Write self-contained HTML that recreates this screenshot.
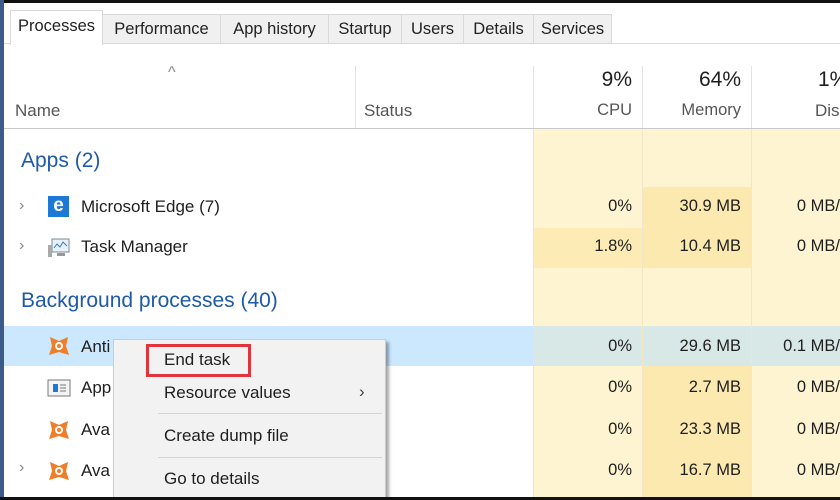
<!DOCTYPE html>
<html><head><style>
*{margin:0;padding:0;box-sizing:border-box}
body{width:840px;height:500px;overflow:hidden;background:#fff;font-family:"Liberation Sans",sans-serif;color:#1e1e1e;position:relative}
.a{position:absolute;white-space:nowrap}
.t{font-size:17px}
.tab{position:absolute;top:14px;height:30px;background:#f0f0f0;border:1px solid #d9d9d9;border-left:none;font-size:16.5px;padding-top:5px;text-align:center;color:#222}
.r{text-align:right;font-size:16.5px}
.vl{position:absolute;width:1px;background:#e3e3e3}
</style></head><body>
<div class="a" style="left:4px;top:43px;width:836px;height:1px;background:#d9d9d9"></div>
<div class="tab" style="left:103px;width:118px">Performance</div>
<div class="tab" style="left:221px;width:108px">App history</div>
<div class="tab" style="left:329px;width:73px">Startup</div>
<div class="tab" style="left:402px;width:62px">Users</div>
<div class="tab" style="left:464px;width:70px">Details</div>
<div class="tab" style="left:534px;width:78px">Services</div>
<div class="tab" style="left:10px;top:10px;width:93px;height:35px;background:#fff;border-left:1px solid #d9d9d9;border-bottom:none;padding-top:6px">Processes</div>
<!-- column backgrounds -->
<div class="a" style="left:533px;top:129px;width:307px;height:371px;background:#fff4d2"></div>
<div class="a" style="left:642px;top:187px;width:109px;height:41px;background:#fbe9b0"></div>
<div class="a" style="left:533px;top:228px;width:109px;height:40px;background:#fcebb4"></div>
<div class="a" style="left:642px;top:228px;width:109px;height:40px;background:#fbe9b0"></div>
<div class="a" style="left:642px;top:366px;width:109px;height:134px;background:#fbe9b0"></div>
<div class="a" style="left:4px;top:326px;width:529px;height:40px;background:#cce8ff"></div>
<div class="a" style="left:533px;top:326px;width:307px;height:40px;background:#d8e8e6"></div>
<div class="vl" style="left:355px;top:66px;height:62px"></div>
<div class="vl" style="left:533px;top:66px;height:434px"></div>
<div class="vl" style="left:642px;top:66px;height:434px;background:#f2e6c6"></div>
<div class="vl" style="left:751px;top:66px;height:434px;background:#f2e6c6"></div>
<div class="vl" style="left:642px;top:66px;height:62px"></div>
<div class="vl" style="left:751px;top:66px;height:62px"></div>
<div class="a" style="left:4px;top:128px;width:836px;height:1px;background:#c9c9c9"></div>
<!-- header -->
<div class="a" style="left:168px;top:64px;color:#888;font-size:16px">&#94;</div>
<div class="a t" style="left:15px;top:101px;color:#555">Name</div>
<div class="a t" style="left:364px;top:101px;color:#555">Status</div>
<div class="a r" style="left:533px;width:99px;top:68px;font-size:21px">9%</div>
<div class="a r" style="left:642px;width:99px;top:68px;font-size:21px">64%</div>
<div class="a" style="left:818px;top:68px;font-size:21px">1%</div>
<div class="a r" style="left:533px;width:99px;top:101px;color:#555">CPU</div>
<div class="a r" style="left:642px;width:99px;top:101px;color:#555">Memory</div>
<div class="a t" style="left:815px;top:101px;color:#555">Disk</div>
<!-- groups -->
<div class="a" style="left:21px;top:149px;font-size:21px;color:#1e5aa8">Apps (2)</div>
<div class="a" style="left:21px;top:289px;font-size:21px;color:#1e5aa8">Background processes (40)</div>
<!-- rows -->
<div class="a" style="left:19px;top:197px;color:#888">&#8250;</div>
<div class="a" style="left:19px;top:237px;color:#888">&#8250;</div>
<div class="a" style="left:19px;top:459px;color:#888">&#8250;</div>
<div class="a" style="left:48px;top:196px;width:21px;height:21px;background:#1e78d6;color:#fff;font-weight:bold;font-size:19px;text-align:center;line-height:19px">e</div>
<svg class="a" style="left:47px;top:237px" width="24" height="22"><rect x="5" y="2" width="17" height="13" fill="#e8f0f8" stroke="#7a8a9a"/><path d="M7 11 L10 7 L13 10 L16 5 L20 9" stroke="#3a7ac0" fill="none"/><rect x="1" y="8" width="4" height="12" fill="#aaa"/><rect x="10" y="16" width="8" height="3" fill="#999"/></svg>
<div class="a t" style="left:81px;top:197px">Microsoft Edge (7)</div>
<div class="a t" style="left:81px;top:237px">Task Manager</div>
<svg class="a" style="left:47px;top:334px" width="24" height="24"><path d="M3 3 L12 7 L21 3 L19 12 L22 21 L12 18 L2 21 L5 12 Z" fill="#f07d28"/><circle cx="12" cy="12" r="4" fill="#fff"/><circle cx="12" cy="12" r="2" fill="#f07d28"/></svg>
<svg class="a" style="left:47px;top:418px" width="24" height="24"><path d="M3 3 L12 7 L21 3 L19 12 L22 21 L12 18 L2 21 L5 12 Z" fill="#f07d28"/><circle cx="12" cy="12" r="4" fill="#fff"/><circle cx="12" cy="12" r="2" fill="#f07d28"/></svg>
<svg class="a" style="left:47px;top:459px" width="24" height="24"><path d="M3 3 L12 7 L21 3 L19 12 L22 21 L12 18 L2 21 L5 12 Z" fill="#f07d28"/><circle cx="12" cy="12" r="4" fill="#fff"/><circle cx="12" cy="12" r="2" fill="#f07d28"/></svg>
<svg class="a" style="left:47px;top:378px" width="24" height="20"><rect x="1" y="2" width="22" height="16" fill="#f4f4f4" stroke="#777"/><rect x="6" y="6" width="5" height="8" fill="#1e78d6"/><path d="M13 7h6M13 10h6M13 13h6" stroke="#777"/></svg>
<div class="a t" style="left:81px;top:337px">Anti</div>
<div class="a t" style="left:81px;top:378px">App</div>
<div class="a t" style="left:81px;top:420px">Ava</div>
<div class="a t" style="left:81px;top:461px">Ava</div>
<div class="a r" style="left:533px;width:99px;top:197px">0%</div>
<div class="a r" style="left:642px;width:99px;top:197px">30.9 MB</div>
<div class="a r" style="left:751px;width:89px;top:197px">0 MB/</div>
<div class="a r" style="left:533px;width:99px;top:237px">1.8%</div>
<div class="a r" style="left:642px;width:99px;top:237px">10.4 MB</div>
<div class="a r" style="left:751px;width:89px;top:237px">0 MB/</div>
<div class="a r" style="left:533px;width:99px;top:337px">0%</div>
<div class="a r" style="left:642px;width:99px;top:337px">29.6 MB</div>
<div class="a r" style="left:751px;width:89px;top:337px">0.1 MB/</div>
<div class="a r" style="left:533px;width:99px;top:378px">0%</div>
<div class="a r" style="left:642px;width:99px;top:378px">2.7 MB</div>
<div class="a r" style="left:751px;width:89px;top:378px">0 MB/</div>
<div class="a r" style="left:533px;width:99px;top:420px">0%</div>
<div class="a r" style="left:642px;width:99px;top:420px">23.3 MB</div>
<div class="a r" style="left:751px;width:89px;top:420px">0 MB/</div>
<div class="a r" style="left:533px;width:99px;top:461px">0%</div>
<div class="a r" style="left:642px;width:99px;top:461px">16.7 MB</div>
<div class="a r" style="left:751px;width:89px;top:461px">0 MB/</div>
<!-- context menu -->
<div class="a" style="left:113px;top:339px;width:273px;height:160px;background:#f2f2f2;border:1px solid #ccc;box-shadow:3px 3px 3px rgba(0,0,0,.35)"></div>
<div class="a" style="left:158px;top:413px;width:224px;height:1px;background:#d4d4d4"></div>
<div class="a" style="left:158px;top:457px;width:224px;height:1px;background:#d4d4d4"></div>
<div class="a" style="left:146px;top:344px;width:105px;height:33px;border:3px solid #e0353d"></div>
<div class="a t" style="left:164px;top:350px">End task</div>
<div class="a t" style="left:164px;top:383px">Resource values</div>
<div class="a t" style="left:359px;top:382px;color:#444">&#8250;</div>
<div class="a t" style="left:164px;top:426px">Create dump file</div>
<div class="a t" style="left:164px;top:469px">Go to details</div>
<!-- frame -->
<div class="a" style="left:0;top:0;width:840px;height:3px;background:#111"></div>
<div class="a" style="left:0;top:0;width:4px;height:500px;background:#3c5a8a"></div>
<div class="a" style="left:0;top:497px;width:840px;height:3px;background:#111"></div>
</body></html>
